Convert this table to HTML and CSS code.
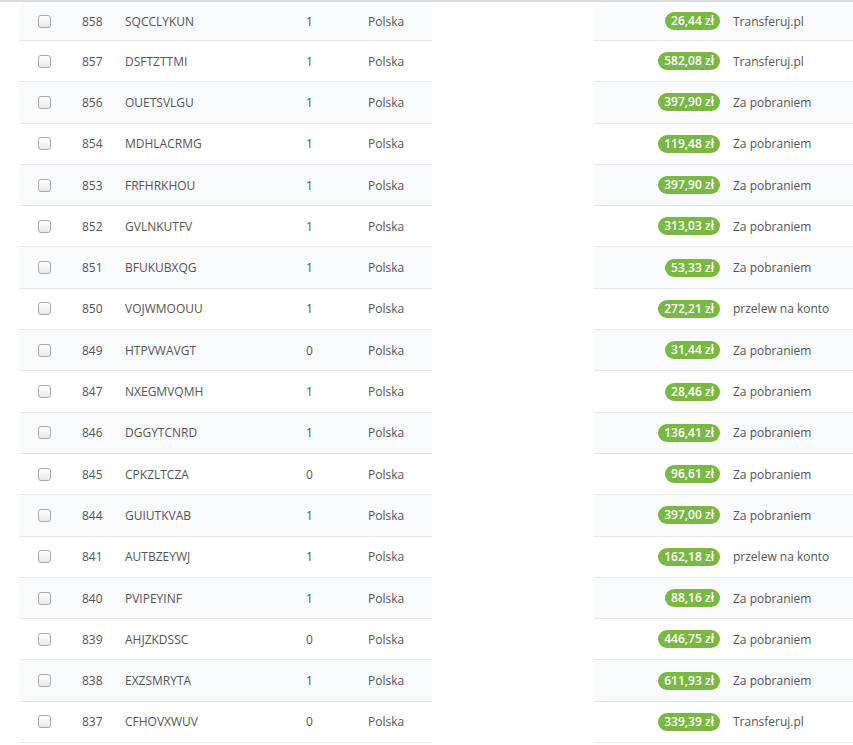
FILE: index.html
```html
<!DOCTYPE html>
<html lang="pl">
<head>
<meta charset="utf-8">
<title>Zamówienia</title>
<link rel="stylesheet" href="styles.css">
</head>
<body>
<div class="orders">
  <div class="row first"><div class="left"><span class="c-cb"><input type="checkbox" class="cb"></span><span class="c-id">858</span><span class="c-code">SQCCLYKUN</span><span class="c-qty">1</span><span class="c-country">Polska</span></div><div class="gap"></div><div class="right"><span class="c-price"><span class="badge">26,44 zł</span></span><span class="c-pay">Transferuj.pl</span></div></div>
  <div class="row"><div class="left"><span class="c-cb"><input type="checkbox" class="cb"></span><span class="c-id">857</span><span class="c-code">DSFTZTTMI</span><span class="c-qty">1</span><span class="c-country">Polska</span></div><div class="gap"></div><div class="right"><span class="c-price"><span class="badge">582,08 zł</span></span><span class="c-pay">Transferuj.pl</span></div></div>
  <div class="row"><div class="left"><span class="c-cb"><input type="checkbox" class="cb"></span><span class="c-id">856</span><span class="c-code">OUETSVLGU</span><span class="c-qty">1</span><span class="c-country">Polska</span></div><div class="gap"></div><div class="right"><span class="c-price"><span class="badge">397,90 zł</span></span><span class="c-pay">Za pobraniem</span></div></div>
  <div class="row"><div class="left"><span class="c-cb"><input type="checkbox" class="cb"></span><span class="c-id">854</span><span class="c-code">MDHLACRMG</span><span class="c-qty">1</span><span class="c-country">Polska</span></div><div class="gap"></div><div class="right"><span class="c-price"><span class="badge">119,48 zł</span></span><span class="c-pay">Za pobraniem</span></div></div>
  <div class="row"><div class="left"><span class="c-cb"><input type="checkbox" class="cb"></span><span class="c-id">853</span><span class="c-code">FRFHRKHOU</span><span class="c-qty">1</span><span class="c-country">Polska</span></div><div class="gap"></div><div class="right"><span class="c-price"><span class="badge">397,90 zł</span></span><span class="c-pay">Za pobraniem</span></div></div>
  <div class="row"><div class="left"><span class="c-cb"><input type="checkbox" class="cb"></span><span class="c-id">852</span><span class="c-code">GVLNKUTFV</span><span class="c-qty">1</span><span class="c-country">Polska</span></div><div class="gap"></div><div class="right"><span class="c-price"><span class="badge">313,03 zł</span></span><span class="c-pay">Za pobraniem</span></div></div>
  <div class="row"><div class="left"><span class="c-cb"><input type="checkbox" class="cb"></span><span class="c-id">851</span><span class="c-code">BFUKUBXQG</span><span class="c-qty">1</span><span class="c-country">Polska</span></div><div class="gap"></div><div class="right"><span class="c-price"><span class="badge">53,33 zł</span></span><span class="c-pay">Za pobraniem</span></div></div>
  <div class="row"><div class="left"><span class="c-cb"><input type="checkbox" class="cb"></span><span class="c-id">850</span><span class="c-code">VOJWMOOUU</span><span class="c-qty">1</span><span class="c-country">Polska</span></div><div class="gap"></div><div class="right"><span class="c-price"><span class="badge">272,21 zł</span></span><span class="c-pay">przelew na konto</span></div></div>
  <div class="row"><div class="left"><span class="c-cb"><input type="checkbox" class="cb"></span><span class="c-id">849</span><span class="c-code">HTPVWAVGT</span><span class="c-qty">0</span><span class="c-country">Polska</span></div><div class="gap"></div><div class="right"><span class="c-price"><span class="badge">31,44 zł</span></span><span class="c-pay">Za pobraniem</span></div></div>
  <div class="row"><div class="left"><span class="c-cb"><input type="checkbox" class="cb"></span><span class="c-id">847</span><span class="c-code">NXEGMVQMH</span><span class="c-qty">1</span><span class="c-country">Polska</span></div><div class="gap"></div><div class="right"><span class="c-price"><span class="badge">28,46 zł</span></span><span class="c-pay">Za pobraniem</span></div></div>
  <div class="row"><div class="left"><span class="c-cb"><input type="checkbox" class="cb"></span><span class="c-id">846</span><span class="c-code">DGGYTCNRD</span><span class="c-qty">1</span><span class="c-country">Polska</span></div><div class="gap"></div><div class="right"><span class="c-price"><span class="badge">136,41 zł</span></span><span class="c-pay">Za pobraniem</span></div></div>
  <div class="row"><div class="left"><span class="c-cb"><input type="checkbox" class="cb"></span><span class="c-id">845</span><span class="c-code">CPKZLTCZA</span><span class="c-qty">0</span><span class="c-country">Polska</span></div><div class="gap"></div><div class="right"><span class="c-price"><span class="badge">96,61 zł</span></span><span class="c-pay">Za pobraniem</span></div></div>
  <div class="row"><div class="left"><span class="c-cb"><input type="checkbox" class="cb"></span><span class="c-id">844</span><span class="c-code">GUIUTKVAB</span><span class="c-qty">1</span><span class="c-country">Polska</span></div><div class="gap"></div><div class="right"><span class="c-price"><span class="badge">397,00 zł</span></span><span class="c-pay">Za pobraniem</span></div></div>
  <div class="row"><div class="left"><span class="c-cb"><input type="checkbox" class="cb"></span><span class="c-id">841</span><span class="c-code">AUTBZEYWJ</span><span class="c-qty">1</span><span class="c-country">Polska</span></div><div class="gap"></div><div class="right"><span class="c-price"><span class="badge">162,18 zł</span></span><span class="c-pay">przelew na konto</span></div></div>
  <div class="row"><div class="left"><span class="c-cb"><input type="checkbox" class="cb"></span><span class="c-id">840</span><span class="c-code">PVIPEYINF</span><span class="c-qty">1</span><span class="c-country">Polska</span></div><div class="gap"></div><div class="right"><span class="c-price"><span class="badge">88,16 zł</span></span><span class="c-pay">Za pobraniem</span></div></div>
  <div class="row"><div class="left"><span class="c-cb"><input type="checkbox" class="cb"></span><span class="c-id">839</span><span class="c-code">AHJZKDSSC</span><span class="c-qty">0</span><span class="c-country">Polska</span></div><div class="gap"></div><div class="right"><span class="c-price"><span class="badge">446,75 zł</span></span><span class="c-pay">Za pobraniem</span></div></div>
  <div class="row"><div class="left"><span class="c-cb"><input type="checkbox" class="cb"></span><span class="c-id">838</span><span class="c-code">EXZSMRYTA</span><span class="c-qty">1</span><span class="c-country">Polska</span></div><div class="gap"></div><div class="right"><span class="c-price"><span class="badge">611,93 zł</span></span><span class="c-pay">Za pobraniem</span></div></div>
  <div class="row"><div class="left"><span class="c-cb"><input type="checkbox" class="cb"></span><span class="c-id">837</span><span class="c-code">CFHOVXWUV</span><span class="c-qty">0</span><span class="c-country">Polska</span></div><div class="gap"></div><div class="right"><span class="c-price"><span class="badge">339,39 zł</span></span><span class="c-pay">Transferuj.pl</span></div></div>
</div>
</body>
</html>
```

FILE: styles.css
```css
html, body {
  margin: 0;
  padding: 0;
  background: #fff;
  overflow: hidden;
}

body {
  font-family: "Open Sans", "Liberation Sans", sans-serif;
  font-size: 12px;
  color: #555;
}

.orders {
  width: 853px;
  border-top: 2px solid #dcdcdc;
}

.row {
  display: flex;
  height: 41.3px;
}

.row.first {
  height: 39px;
}

.left,
.right {
  display: flex;
  align-items: center;
  border-bottom: 1px solid #e6e8eb;
  box-sizing: border-box;
  height: 100%;
}

.row:nth-child(odd) .left,
.row:nth-child(odd) .right {
  background: #f9fafc;
}

.left {
  margin-left: 19px;
  width: 413px;
  flex: none;
}

.gap {
  width: 162px;
  flex: none;
}

.right {
  flex: 1;
}

.c-cb {
  width: 63px;
  padding-left: 19px;
  box-sizing: border-box;
  display: flex;
  align-items: center;
}

.cb {
  appearance: none;
  -webkit-appearance: none;
  margin: 0;
  width: 13px;
  height: 13px;
  border: 1px solid #a9a9a9;
  border-radius: 3px;
  background: linear-gradient(#ffffff, #e9e9e9);
  box-sizing: border-box;
}

.c-id {
  width: 43px;
}

.c-code {
  width: 181px;
}

.c-qty {
  width: 62px;
}

.c-country {
  flex: 1;
}

.c-price {
  width: 126px;
  display: flex;
  justify-content: flex-end;
}

.badge {
  background: #79b843;
  color: #fff;
  font-weight: 600;
  font-size: 12px;
  line-height: 18px;
  height: 18px;
  padding: 0 6px;
  border-radius: 9px;
}

.c-pay {
  padding-left: 13px;
}
```
